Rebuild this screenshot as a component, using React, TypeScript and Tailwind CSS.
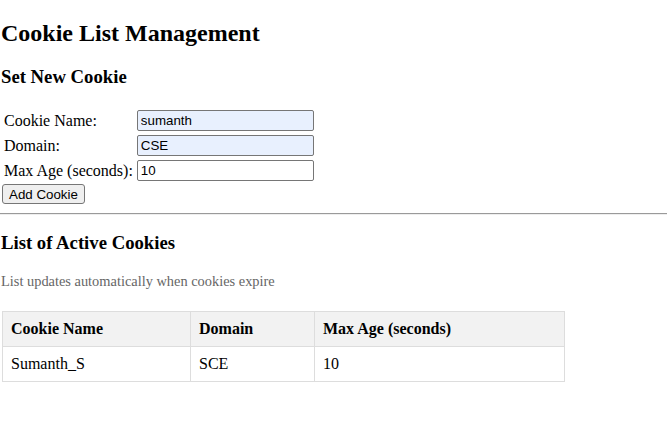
import React from "react";

const serif = { fontFamily: '"Liberation Serif", "Times New Roman", serif' };
const arial = { fontFamily: '"Liberation Sans", Arial, sans-serif' };

export default function App() {
  return (
    <div className="bg-white text-black text-[16px] leading-[normal] min-h-[428px] flow-root" style={serif}>
      <h1 className="text-[24px] font-bold mt-[20px] mb-[16px] pl-[1px]">Cookie List Management</h1>
      <h3 className="text-[18.72px] font-bold mt-[18.72px] mb-[19.5px] pl-[1px]">Set New Cookie</h3>
      <table className="ml-[1px] border-separate border-spacing-[2px]">
        <tbody>
          {[
            ["Cookie Name:", "sumanth", true],
            ["Domain:", "CSE", true],
            ["Max Age (seconds):", "10", false],
          ].map(([label, value, auto]) => (
            <tr key={label as string}>
              <td className="p-[1px] align-middle">{label as string}</td>
              <td className="p-[1px] align-middle">
                <input
                  readOnly
                  value={value as string}
                  className={`block w-[177px] h-[21px] border border-[#767676] rounded-[2px] px-[3px] text-[13.33px] text-black outline-none ${
                    auto ? "bg-[#e8f0fe]" : "bg-white"
                  }`}
                  style={arial}
                />
              </td>
            </tr>
          ))}
        </tbody>
      </table>
      <button
        className="block ml-[2px] h-[20px] px-[6px] border border-[#767676] rounded-[3px] bg-[#efefef] text-[13.33px] text-black leading-none"
        style={arial}
      >
        Add Cookie
      </button>
      <hr className="mt-[9px] h-0 border-0 border-t border-t-[#9a9a9a] border-b border-b-[#eeeeee]" />
      <h3 className="text-[18.72px] font-bold mt-[17px] mb-[18.72px] pl-[1px]">List of Active Cookies</h3>
      <p className="text-[14.4px] text-[#666666] pl-[1px]">List updates automatically when cookies expire</p>
      <table className="ml-[2px] mt-[21px] w-[563px] border-collapse border border-[#dddddd] text-left">
        <thead>
          <tr className="bg-[#f2f2f2]">
            <th className="w-[188px] border border-[#dddddd] px-[8px] py-[8px] font-bold">Cookie Name</th>
            <th className="w-[124px] border border-[#dddddd] px-[8px] py-[8px] font-bold">Domain</th>
            <th className="border border-[#dddddd] px-[8px] py-[8px] font-bold">Max Age (seconds)</th>
          </tr>
        </thead>
        <tbody>
          <tr>
            <td className="border border-[#dddddd] px-[8px] py-[8px]">Sumanth_S</td>
            <td className="border border-[#dddddd] px-[8px] py-[8px]">SCE</td>
            <td className="border border-[#dddddd] px-[8px] py-[8px]">10</td>
          </tr>
        </tbody>
      </table>
    </div>
  );
}
